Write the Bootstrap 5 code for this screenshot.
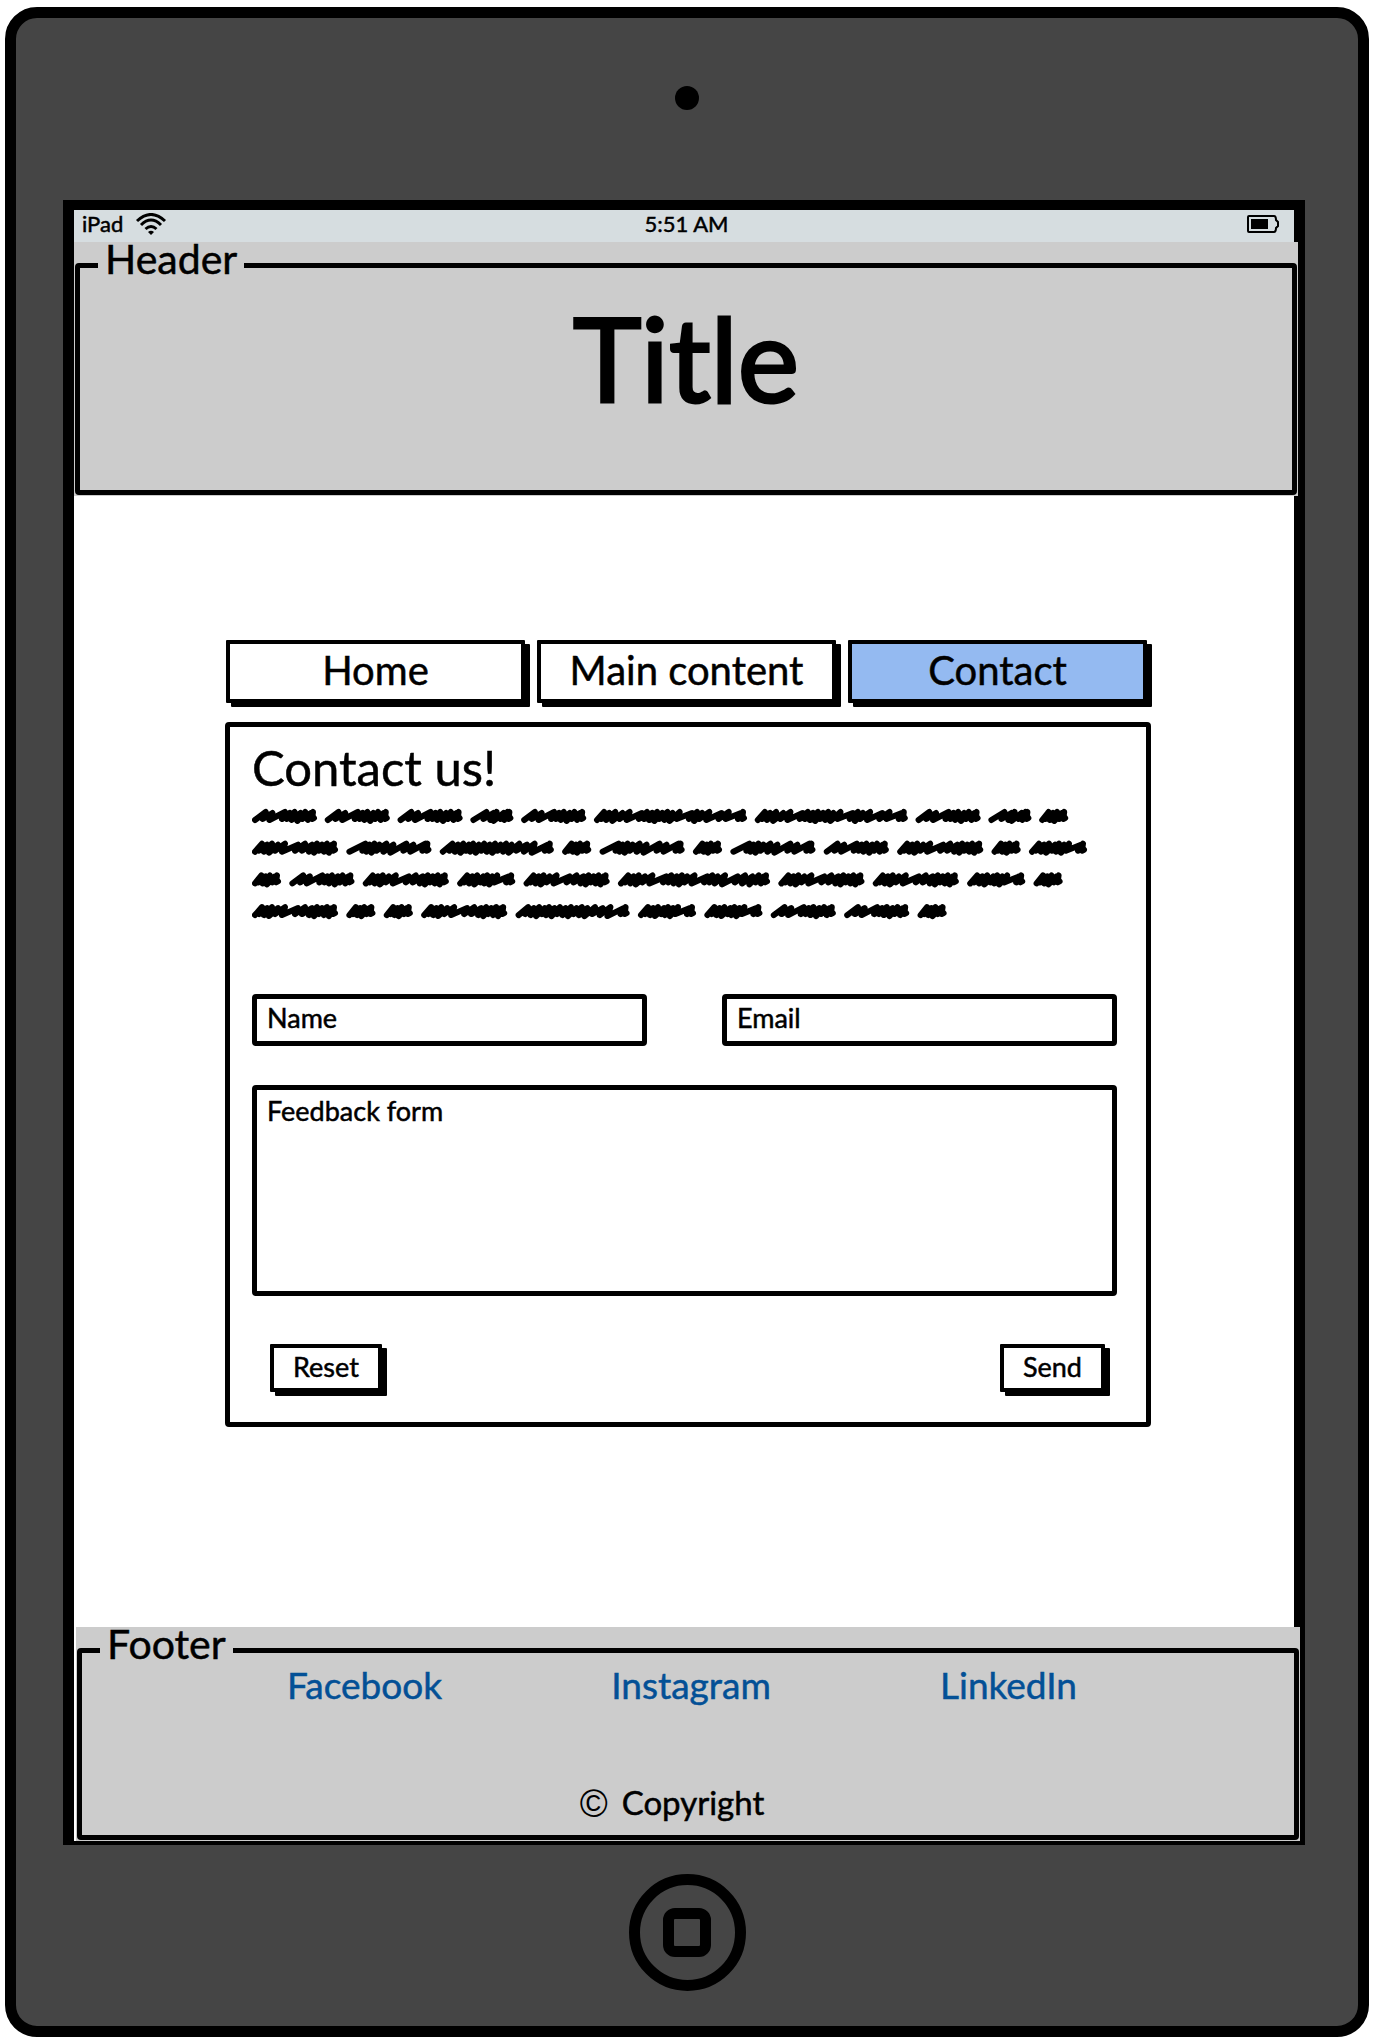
<!DOCTYPE html>
<html lang="en">
<head>
<meta charset="utf-8">
<meta name="viewport" content="width=device-width, initial-scale=1">
<title>Contact us</title>
<link href="https://cdn.jsdelivr.net/npm/bootstrap@5.3.0/dist/css/bootstrap.min.css" rel="stylesheet">
<style>
  body { font-family: Lato, "Open Sans", sans-serif; color: #000; background: #fff; padding: 7px 5px 5px; -webkit-text-stroke: .5px; }
  .tablet { background: #454545; border: 11px solid #000; border-radius: 32px; padding: 68px 47px 35px; }
  .camera { width: 24px; height: 24px; margin-bottom: 90px; }
  .screen { border: 11px solid #000; border-top-width: 10px; border-bottom-width: 4px; margin-right: 6px; }
  .status { background: #d6dde0; height: 32px; font-size: 22px; line-height: 28px; padding: 0 15px 4px 8px; }
  .status > div { flex: 1 1 0; }
  .status > div:nth-child(2) { padding-left: 12px; }
  .band { background: #ccc; padding: 0 1px 1px; }
  .band-top { margin-right: -4px; }
  .band-bottom { margin-left: 2px; margin-right: -6px; }
  .band fieldset { border: 5px solid #000; border-radius: 4px; }
  .band legend { float: none; width: auto; margin: 0 0 0 18px; padding: 0 7px 12px; font-size: 41px; line-height: 34px; }
  .band-top fieldset { min-height: 253px; }
  .page-title { font-size: 116px; line-height: 120px; font-weight: 400; padding-top: 10px; margin: 0; -webkit-text-stroke: 3px; }
  main { padding: 144px 0 200px 8px; }
  .content { max-width: 926px; }
  .tabs { gap: 12px; padding: 0 4px 0 1px; margin-bottom: 19px; }
  .sketch-btn { background: #fff; color: #000; border: 4px solid #000; border-radius: 1px; box-shadow: 5px 4px 0 #000; padding: 0; -webkit-text-stroke: .5px; }
  .tabs .sketch-btn { flex: 1 1 0; height: 63px; font-size: 40px; line-height: 50px; padding-bottom: 4px; }
  .tabs .active { background: #94baf1; }
  .panel { border: 5px solid #000; border-radius: 4px; padding: 15px 29px 30px 22px; }
  .panel h2 { font-size: 49px; line-height: 50px; font-weight: 400; margin: 0; }
  .scribble { width: 100%; margin-bottom: 62px; }
  .fields { gap: 75px; margin-bottom: 39px; }
  .fields > div { flex: 1 1 0; }
  .sketch-field { border: 5px solid #000; border-radius: 4px; background: #fff; color: #000; font-size: 27px; line-height: 32px; padding: 3px 10px; height: 52px; }
  textarea.sketch-field { height: 211px; resize: none; }
  .field-label { position: absolute; top: 8px; left: 15px; font-size: 27px; line-height: 32px; pointer-events: none; }
  textarea + .field-label { top: 10px; }
  .sketch-field:not(:placeholder-shown) + .field-label { display: none; }
  .actions { margin-top: 48px; padding: 0 12px 0 18px; }
  .actions .sketch-btn { height: 48px; padding: 0 19px 2px; font-size: 27px; line-height: 36px; }
  .links { padding: 0 217px 0 205px; font-size: 37px; line-height: 24px; }
  .links a { color: #035096; text-decoration: none; }
  .copy { font-size: 33px; line-height: 40px; gap: 14px; margin-top: 83px; padding: 0 32px 11px 0; }
  .copy span { font-family: "Liberation Sans", sans-serif; font-size: 38px; padding-top: 4px; -webkit-text-stroke: 0; }
  .home-key { background: none; border: 11px solid #000; width: 117px; height: 117px; padding: 0; margin-top: 29px; }
  .home-key span { width: 48px; height: 49px; border: 11px solid #000; border-radius: 12px; }
</style>
<script src="https://cdn.jsdelivr.net/npm/bootstrap@5.3.0/dist/js/bootstrap.bundle.min.js"></script>
</head>
<body>
<div class="tablet">
  <div class="camera rounded-circle bg-black mx-auto"></div>
  <div class="screen bg-white">
    <div class="status d-flex align-items-center">
      <div class="d-flex align-items-center gap-2">iPad
        <svg class="ms-1" width="32" height="22" viewBox="0 0 32 22" fill="none" stroke="#000" stroke-width="3" aria-hidden="true">
          <path d="M2 8Q16-5 30 8M6 12Q16 2 26 12M10.500 16Q16 11 21.500 16"/>
          <path d="M13 19Q16 16.500 19 19L16 22Z" fill="#000" stroke="none"/>
        </svg>
      </div>
      <div class="text-center">5:51 AM</div>
      <div class="d-flex justify-content-end">
        <svg width="32" height="18" viewBox="0 0 32 18" aria-hidden="true">
          <path d="M2 1H27Q29 1 29 5L31 7V11L29 13Q29 17 27 17H2Q1 17 1 16V2Q1 1 2 1Z" fill="none" stroke="#000" stroke-width="2"/>
          <path d="M4 4H21V14H4Z"/>
        </svg>
      </div>
    </div>

    <header class="band band-top">
      <fieldset>
        <legend>Header</legend>
        <h1 class="page-title text-center">Title</h1>
      </fieldset>
    </header>

    <main>
      <div class="content mx-auto">
        <nav class="tabs d-flex">
          <button type="button" class="sketch-btn">Home</button>
          <button type="button" class="sketch-btn">Main content</button>
          <button type="button" class="sketch-btn active" aria-current="page">Contact</button>
        </nav>
        <form class="panel">
          <h2>Contact us!</h2>
          <svg class="scribble d-block" viewBox="0 0 865 140" fill="none" stroke="#000" stroke-width="6" stroke-linecap="round" stroke-linejoin="round" aria-hidden="true"><path id="words"/></svg>
          <div class="fields d-flex">
            <div class="position-relative">
              <input class="sketch-field d-block w-100" id="name" type="text" placeholder=" ">
              <label class="field-label" for="name">Name</label>
            </div>
            <div class="position-relative">
              <input class="sketch-field d-block w-100" id="email" type="email" placeholder=" ">
              <label class="field-label" for="email">Email</label>
            </div>
          </div>
          <div class="position-relative">
            <textarea class="sketch-field d-block w-100" id="feedback" placeholder=" "></textarea>
            <label class="field-label" for="feedback">Feedback form</label>
          </div>
          <div class="actions d-flex justify-content-between">
            <button type="reset" class="sketch-btn">Reset</button>
            <button type="submit" class="sketch-btn">Send</button>
          </div>
        </form>
      </div>
    </main>

    <footer class="band band-bottom">
      <fieldset>
        <legend>Footer</legend>
        <div class="links d-flex justify-content-between">
          <a href="#">Facebook</a>
          <a href="#">Instagram</a>
          <a href="#">LinkedIn</a>
        </div>
        <div class="copy d-flex justify-content-center align-items-center"><span>©</span>Copyright</div>
      </fieldset>
    </footer>
  </div>
  <button type="button" class="home-key rounded-circle d-flex align-items-center justify-content-center mx-auto" aria-label="Home button"><span></span></button>
</div>
<script>
  // Placeholder copy: every number is the width of one scribbled word.
  const lines = [
    [65, 65, 65, 43, 65, 153, 153, 65, 43, 29],
    [86, 85, 114, 29, 85, 29, 85, 65, 86, 29, 58],
    [29, 65, 86, 58, 86, 152, 86, 86, 58, 29],
    [86, 29, 29, 86, 114, 58, 58, 65, 65, 29]
  ];
  const steps = {
    65: [8, 7, 13, 5, 5, 6, 5, 6], 43: [13, 9, 4, 9, 5], 29: [4, 5, 5, 6],
    58: [4, 5, 5, 6, 4, 5, 5, 12], 86: [4, 5, 5, 6, 7, 13, 7, 7, 5, 5, 5, 5],
    85: [13, 4, 5, 5, 7, 7, 13, 7, 12], 114: [6, 5, 5, 5, 4, 5, 5, 5, 5, 5, 5, 5, 7, 7, 7, 12],
    153: [4, 5, 6, 7, 7, 12, 5, 5, 5, 5, 5, 5, 7, 12, 5, 5, 7, 12, 7, 12], 152: [4, 5, 5, 6, 7, 13, 5, 5, 5, 5, 7, 12, 5, 5, 7, 12, 7, 7, 6, 5]
  };
  let d = "";
  lines.forEach((line, row) => {
    let x = 0;
    const y = 24 + row * 31.7;
    line.forEach(width => {
      const set = steps[width], total = set.reduce((a, b) => a + b, 0);
      const unit = (width - 12) / total;
      let p = x + 3;
      d += `M${p} ${y + 4}`;
      set.forEach((s, i) => {
        const dip = s > 10 ? 0 : i % 3;
        d += `L${p + s * unit + 3} ${y - 4 + i % 2}L${p + s * unit} ${y + 3 + dip}`;
        p += s * unit;
      });
      d += `L${x + width - 4} ${y - 4}L${x + width - 5} ${y + 3}L${x + width - 3} ${y + 2}`;
      x += width + (row ? 8.4 : 7.8);
    });
  });
  document.getElementById("words").setAttribute("d", d);
</script>
</body>
</html>
